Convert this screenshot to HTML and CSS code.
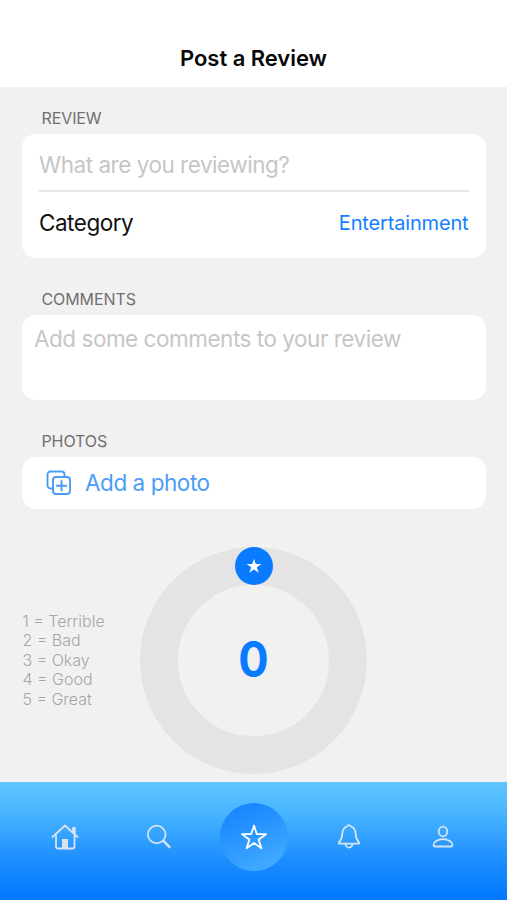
FILE: index.html
```html
<!DOCTYPE html>
<html lang="en">
<head>
<meta charset="utf-8">
<title>Post a Review</title>
<link rel="stylesheet" href="styles.css">
</head>
<body>
<div class="screen">
  <header class="header"><h1 class="title">Post a Review</h1></header>
  <main class="form">
    <h2 class="label">REVIEW</h2>
    <section class="card review-card">
      <div class="subject"><span class="subject-text">What are you reviewing?</span></div>
      <div class="category"><span class="category-name">Category</span><span class="category-value">Entertainment</span></div>
    </section>
    <h2 class="label label-comments">COMMENTS</h2>
    <section class="card comments-card"><span class="comments-text">Add some comments to your review</span></section>
    <h2 class="label label-photos">PHOTOS</h2>
    <section class="card photo-card">
      <svg class="photo-icon" viewBox="0 0 26 26" width="26" height="26">
        <path d="M7 18.500H4.500a3 3 0 0 1-3-3v-11a3 3 0 0 1 3-3h11a3 3 0 0 1 3 3V7"/>
        <rect x="7" y="7" width="17" height="17" rx="3"/>
        <path d="M15.500 11v9.500M10.700 15.700h9.600"/>
      </svg>
      <span class="photo-text">Add a photo</span>
    </section>
    <section class="rating">
      <ul class="scale">
        <li>1 = Terrible</li>
        <li>2 = Bad</li>
        <li>3 = Okay</li>
        <li>4 = Good</li>
        <li>5 = Great</li>
      </ul>
      <div class="dial">
        <span class="score">0</span>
        <span class="knob"><svg viewBox="0 0 24 24" width="16" height="16"><path d="M12 1l2.700 8h8.300l-6.700 5 2.600 8.200L12 17.200l-6.900 5L7.700 14 1 9h8.300z"/></svg></span>
      </div>
    </section>
  </main>
  <nav class="tabs">
    <span class="tab"><svg viewBox="0 0 28 28" width="28" height="28">
      <path d="M1.500 14 14 2.500 26.500 14M5 12v11.500a2 2 0 0 0 2 2h14.500a2 2 0 0 0 2-2V12M22 9.500V5h1.800v6"/>
      <path class="solid" d="M11 25v-9h6v9z"/>
    </svg></span>
    <span class="tab"><svg viewBox="0 0 28 28" width="28" height="28">
      <circle cx="11.700" cy="11.500" r="8.800"/><path class="handle" d="m18.200 17.700 6.300 6.500"/>
    </svg></span>
    <span class="tab tab-active"><svg viewBox="0 0 28 28" width="28" height="28">
      <path d="m14 2.500 2.800 8.700h9.200l-7.400 5.400 2.800 8.700-7.400-5.400-7.400 5.400 2.800-8.700L2 11.200h9.200z"/>
    </svg></span>
    <span class="tab"><svg viewBox="0 0 28 28" width="28" height="28">
      <path d="M4.300 20.700c-.6 0-.6-1.100 0-1.700C6.500 16.800 7 15.300 7.300 11c.3-4.400 2-6.600 4.500-7.300C12.400 2.700 13 2.200 14 2.200s1.600.5 2.200 1.500c2.500.7 4.200 2.900 4.500 7.300.3 4.300.8 5.800 3 8 .6.600.6 1.700 0 1.700zM10.500 21c.3 2.300 1.600 3.600 3.500 3.600s3.200-1.300 3.500-3.600"/>
    </svg></span>
    <span class="tab"><svg viewBox="0 0 28 28" width="28" height="28">
      <ellipse cx="14" cy="8.500" rx="4.200" ry="4.800"/>
      <path d="M6 23.500c-1 0-1.500-.5-1.500-1.500 0-3 4-5.800 9.500-5.800s9.500 2.800 9.500 5.800c0 1-.5 1.500-1.500 1.500z"/>
    </svg></span>
  </nav>
</div>
</body>
</html>
```
FILE: styles.css
```css
* { box-sizing: border-box; margin: 0; padding: 0; }
body {
  background: #f1f1f1;
  font-family: Inter, "Liberation Sans", sans-serif;
  white-space: nowrap;
}
.screen { display: flex; flex-direction: column; height: 900px; overflow: hidden; }
.header {
  height: 87px;
  padding-top: 44px;
  background: #fff;
  text-align: center;
}
.title { font-size: 22px; line-height: 28px; font-weight: 600; letter-spacing: -0.040px; color: #080808; }
.form { flex: 1; min-height: 0; padding: 21px 21.500px 0 22px; }
.label {
  height: 26px;
  padding-left: 19.500px;
  font-size: 16px;
  line-height: 20px;
  font-weight: 400;
  letter-spacing: -0.1px;
  color: #707070;
}
.label-comments { margin-top: 31px; }
.label-photos { margin-top: 31px; }
.card { background: #fff; border-radius: 14px; }
.review-card { height: 124px; padding: 0 17px; }
.subject { height: 57.500px; padding-top: 17px; border-bottom: 2px solid #e7e7e7; }
.subject-text, .comments-text { display: block; font-size: 22.500px; line-height: 28px; letter-spacing: -0.480px; color: #c6c6c8; }
.category { display: flex; justify-content: space-between; align-items: center; height: 63px; }
.category-name { font-size: 22.500px; line-height: 28px; letter-spacing: -0.480px; margin-top: -1px; color: #111; }
.category-value { font-size: 20px; letter-spacing: -0.160px; color: #1480ff; }
.comments-card { height: 85px; padding: 10px 12px; }
.photo-card { height: 52px; padding-left: 24px; display: flex; align-items: center; gap: 13px; color: #4a9cf8; }
.photo-icon { fill: none; stroke: currentColor; stroke-width: 1.900; stroke-linecap: round; }
.photo-text { font-size: 22.500px; line-height: 28px; margin-top: -1px; letter-spacing: -0.450px; }
.rating { display: flex; padding-top: 37.500px; }
.scale {
  width: 118px;
  padding: 65px 0 0 0.500px;
  list-style: none;
  font-size: 16px;
  line-height: 19.500px;
  font-weight: 300;
  color: #a6a6a6;
}
.dial {
  position: relative;
  width: 227px;
  height: 227px;
  border: 38px solid #e4e4e4;
  border-radius: 50%;
  display: flex;
  align-items: center;
  justify-content: center;
}
.score { font-size: 49px; line-height: 50px; font-weight: 700; transform: scaleX(0.920); color: #087bff; }
.knob {
  position: absolute;
  top: -38px;
  left: 56.500px;
  width: 38px;
  height: 38px;
  border-radius: 50%;
  background: #087bff;
  display: flex;
  align-items: center;
  justify-content: center;
}
.knob svg { fill: #fff; }
.tabs {
  height: 118.500px;
  padding: 21px 16.500px 0 17.500px;
  display: flex;
  align-items: flex-start;
  justify-content: space-between;
  background: linear-gradient(#5fc6ff, #47b2ff 28%, #1a8cff 68%, #0078ff);
}
.tab {
  width: 94.600px;
  height: 68px;
  display: flex;
  align-items: center;
  justify-content: center;
}
.tab svg { fill: none; stroke: #d6e3f0; stroke-width: 1.800; stroke-linejoin: round; stroke-linecap: round; }
.tab .solid { fill: #dbe2ea; stroke: none; }
.tab .handle { stroke-width: 2.400; }
.tab-active { width: 68px; margin: 0 13.300px; border-radius: 50%; background: linear-gradient(155deg, #1180ff, #48b0ff); }
.tab-active svg { stroke: #fff; }
```
